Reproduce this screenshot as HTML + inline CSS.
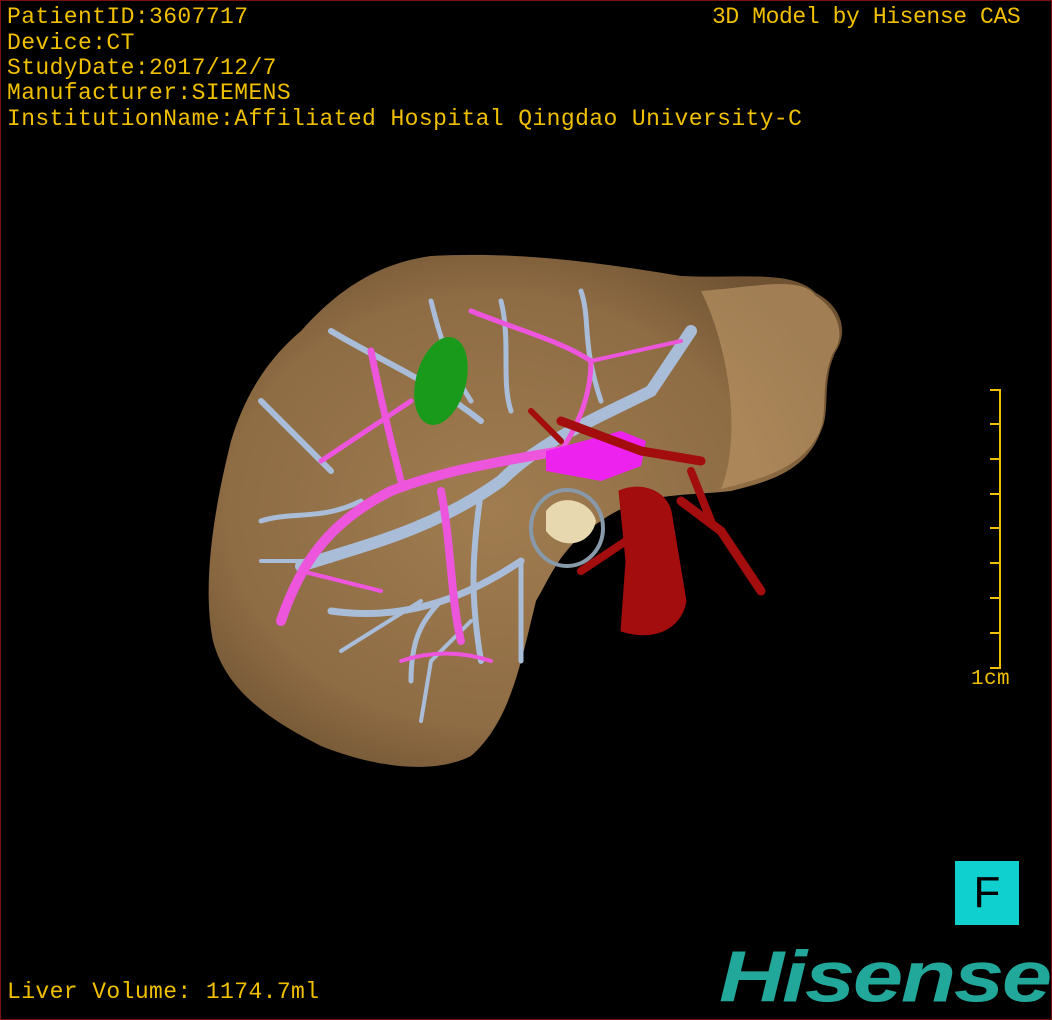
<!DOCTYPE html>
<html><head><style>
html,body{margin:0;padding:0;background:#000;}
#c{position:relative;width:1050px;height:1018px;border:1px solid #7a1010;overflow:hidden;background:#000;}
.t{position:absolute;color:#f0c000;font-family:"Liberation Mono",monospace;font-size:23px;letter-spacing:0.4px;white-space:nowrap;line-height:25px;}
</style></head><body><div id="c">
<svg width="1050" height="1018" style="position:absolute;left:0;top:0">
<defs>
<radialGradient id="lv" cx="0.45" cy="0.5" r="0.6"><stop offset="0" stop-color="#a07c50"/><stop offset="0.7" stop-color="#8e6c44"/><stop offset="1" stop-color="#6e5232"/></radialGradient>
</defs>
<path d="M300 330 C340 285 380 262 430 255 C520 250 600 262 680 275 C740 278 790 268 815 292 C840 305 848 330 835 350 C820 380 830 410 820 430 C805 470 770 480 730 490 C690 495 640 490 600 520 C560 545 550 575 535 600 C520 660 510 720 470 755 C430 775 370 765 320 745 C270 720 225 690 212 640 C200 580 215 500 230 440 C245 390 270 355 300 330 Z" fill="url(#lv)"/>
<path d="M700 290 C760 285 800 275 815 295 C838 310 845 335 832 352 C818 385 828 410 818 432 C800 468 760 478 720 488 C740 440 730 350 700 290Z" fill="#b69262" opacity="0.7"/>
<g stroke="#a9bcd8" stroke-linecap="round" fill="none">
<path d="M300 565 C360 545 430 530 500 480 C540 440 590 420 650 390 L690 330" stroke-width="12"/>
<path d="M330 610 C400 620 460 600 520 560" stroke-width="7"/>
<path d="M520 560 L520 660" stroke-width="5"/>
<path d="M480 490 C470 560 470 600 480 660" stroke-width="6"/>
<path d="M330 470 C300 440 280 420 260 400" stroke-width="6"/>
<path d="M480 420 C430 380 380 360 330 330" stroke-width="6"/>
<path d="M410 680 C410 640 420 620 440 600" stroke-width="5"/>
<path d="M360 500 C320 520 290 510 260 520" stroke-width="5"/>
<path d="M430 300 C440 340 450 370 470 400" stroke-width="5"/>
<path d="M600 400 C580 340 590 320 580 290" stroke-width="5"/>
<path d="M500 300 C510 340 500 380 510 410" stroke-width="5"/>
<path d="M420 720 L430 660 L470 620" stroke-width="4"/>
<path d="M340 650 L420 600" stroke-width="4"/>
<path d="M260 560 L330 560" stroke-width="4"/>
</g>
<g stroke="#ee55dd" stroke-linecap="round" fill="none">
<path d="M280 620 C300 560 330 520 390 490 C440 470 500 460 560 450 L620 445" stroke-width="10"/>
<path d="M440 490 C450 540 450 600 460 640" stroke-width="8"/>
<path d="M400 480 C390 440 380 400 370 350" stroke-width="7"/>
<path d="M560 450 C580 420 590 390 590 360 C560 340 520 330 470 310" stroke-width="5"/>
<path d="M320 460 C350 440 380 420 410 400" stroke-width="5"/>
<path d="M400 660 C430 650 460 650 490 660" stroke-width="4"/>
<path d="M590 360 L680 340" stroke-width="4"/>
<path d="M300 570 L380 590" stroke-width="4"/>
</g>
<path d="M545 450 L620 430 L645 440 L640 465 L600 480 L545 470Z" fill="#ee22ee"/>
<ellipse cx="440" cy="380" rx="25" ry="45" fill="#1a9a1a" transform="rotate(15 440 380)"/>
<ellipse cx="566" cy="527" rx="36" ry="38" fill="none" stroke="#8899aa" stroke-width="4"/>
<path d="M545 510 C560 490 590 500 595 520 C590 545 560 550 545 530Z" fill="#e8d8b0"/>
<g fill="#a30d0d" stroke="#a30d0d" stroke-linecap="round">
<path d="M618 490 C640 480 665 490 670 510 L685 600 C680 630 650 640 620 630 L625 560 Z"/>
<path d="M560 420 L640 450 L700 460" stroke-width="9" fill="none"/>
<path d="M680 500 L720 530 L760 590" stroke-width="9" fill="none"/>
<path d="M640 530 L580 570" stroke-width="8" fill="none"/>
<path d="M690 470 L710 520" stroke-width="8" fill="none"/>
<path d="M530 410 L560 440" stroke-width="6" fill="none"/>
</g>
<g stroke="#f0c000" stroke-width="2" fill="none">
<path d="M999 388 V668"/>
<path d="M989 389 H999 M989 423 H999 M989 458 H999 M989 493 H999 M989 527 H999 M989 562 H999 M989 597 H999 M989 632 H999 M989 667 H999"/>
</g>
</svg>
<div class="t" style="left:6px;top:4px">PatientID:3607717</div>
<div class="t" style="left:6px;top:30px">Device:CT</div>
<div class="t" style="left:6px;top:55px">StudyDate:2017/12/7</div>
<div class="t" style="left:6px;top:80px">Manufacturer:SIEMENS</div>
<div class="t" style="left:6px;top:106px">InstitutionName:Affiliated Hospital Qingdao University-C</div>
<div class="t" style="left:711px;top:4px;letter-spacing:-0.4px">3D Model by Hisense CAS</div>
<div class="t" style="left:970px;top:666px;font-size:21px">1cm</div>
<div class="t" style="left:6px;top:979px">Liver Volume: 1174.7ml</div>
<div style="position:absolute;left:954px;top:860px;width:64px;height:64px;background:#10cfcf;color:#000;font:44px 'Liberation Sans',sans-serif;text-align:center;line-height:64px">F</div>
<div style="position:absolute;left:718px;top:936px;color:#22a89a;font:italic bold 80px 'Liberation Sans',sans-serif;letter-spacing:-2px;line-height:80px;transform:scale(1.13,0.9);transform-origin:left center">Hisense</div>
</div></body></html>
